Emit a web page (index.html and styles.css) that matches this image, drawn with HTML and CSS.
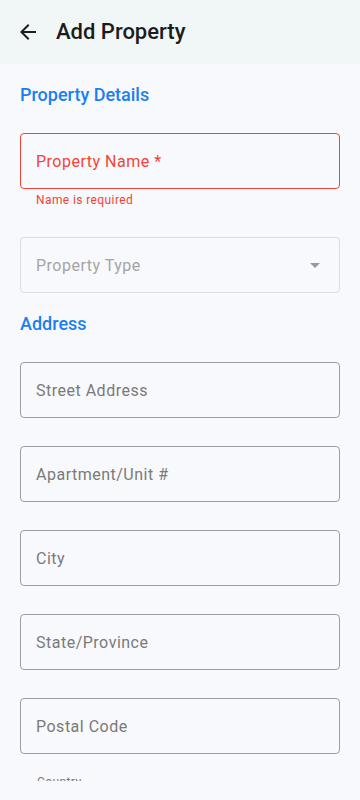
FILE: index.html
```html
<!DOCTYPE html>
<html>
<head>
<meta charset="utf-8">
<link rel="stylesheet" href="styles.css">
</head>
<body>
<div class="app">
  <header class="topbar">
    <svg class="back" viewBox="0 0 24 24" width="24" height="24"><path d="M20 11H7.83l5.59-5.59L12 4l-8 8 8 8 1.41-1.41L7.83 13H20v-2z" fill="#1c1c1c"/></svg>
    <h1 class="title">Add Property</h1>
  </header>
  <main class="content">
    <div class="scroll">
      <h2 class="section">Property Details</h2>
      <div class="field error first"><span class="ph">Property Name *</span></div>
      <div class="helper">Name is required</div>
      <div class="field disabled select"><span class="ph">Property Type</span><span class="caret"></span></div>
      <h2 class="section addr">Address</h2>
      <div class="field"><span class="ph">Street Address</span></div>
      <div class="field"><span class="ph">Apartment/Unit #</span></div>
      <div class="field"><span class="ph">City</span></div>
      <div class="field"><span class="ph">State/Province</span></div>
      <div class="field"><span class="ph">Postal Code</span></div>
      <div class="field floating"><span class="float-label">Country</span></div>
    </div>
  </main>
</div>
</body>
</html>
```
FILE: styles.css
```css
* { box-sizing: border-box; }
html, body { margin: 0; padding: 0; }
body {
  font-family: Roboto, "Noto Sans", sans-serif;
  background: #f7f9fc;
  width: 360px;
  height: 800px;
  overflow: hidden;
}
.app { display: flex; flex-direction: column; height: 800px; }
.topbar {
  height: 64px;
  background: #f1f6f6;
  display: flex;
  align-items: center;
  padding-left: 16px;
  flex: none;
}
.back { display: block; }
.title {
  margin: 0 0 0 16px;
  font-size: 22px;
  font-weight: 500;
  color: #1c1c1c;
  line-height: 28px;
}
.content {
  height: 717px;
  overflow: hidden;
  flex: none;
}
.scroll {
  padding: 20px 20px 0 20px;
  display: flex;
  flex-direction: column;
}
.section {
  margin: 0;
  font-size: 18px;
  line-height: 22px;
  font-weight: 500;
  color: #1a80f2;
}
.section.addr { margin-top: 20px; }
.field {
  height: 56px;
  flex: none;
  border: 1px solid #9e9e9e;
  border-radius: 4px;
  display: flex;
  align-items: center;
  padding: 0 15px;
  margin-top: 28px;
  position: relative;
}
.section + .field { margin-top: 27px; }
.ph { font-size: 16px; letter-spacing: 0.5px; color: #7a7a7a; }
.field.error { border-color: #f44336; }
.field.error .ph { color: #f44336; }
.helper {
  font-size: 12px;
  line-height: 16px;
  letter-spacing: 0.4px;
  color: #f44336;
  padding-left: 16px;
  margin-top: 3px;
}
.helper + .field { margin-top: 29px; }
.field.disabled { border-color: #dcdde0; }
.field.disabled .ph { color: #a5a5a5; }
.select { justify-content: space-between; }
.caret {
  width: 0; height: 0;
  border-left: 5px solid transparent;
  border-right: 5px solid transparent;
  border-top: 5px solid #9a9a9a;
  margin-right: 4px;
}
.float-label {
  position: absolute;
  left: 12px;
  top: -9px;
  padding: 0 4px;
  font-size: 12px;
  line-height: 16px;
  letter-spacing: 0.4px;
  color: #7a7a7a;
  background: #f7f9fc;
}
```
